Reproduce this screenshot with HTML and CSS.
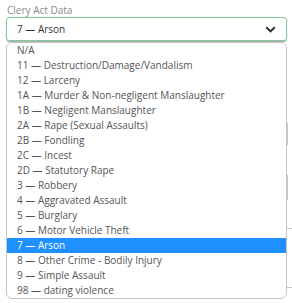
FILE: index.html
```html
<!DOCTYPE html>
<html lang="en">
<head>
    <meta charset="UTF-8">
    <meta name="viewport" content="width=device-width, initial-scale=1.0">
    <title>Clery Act Data</title>
    <link rel="stylesheet" href="styles.css">
</head>
<body>
    <div class="field">
        <label class="field-label">Clery Act Data</label>
        <div class="select">
            <span class="select-value">7 — Arson</span>
            <svg class="chevron" width="11" height="7" viewBox="0 0 11 7">
                <path d="M1.2 1.2 L5.5 5.3 L9.8 1.2" fill="none" stroke="#333" stroke-width="2"/>
            </svg>
        </div>
        <div class="behind">
            <span class="mark mark-a"></span>
            <span class="mark mark-b"></span>
            <span class="mark mark-c"></span>
            <span class="mark mark-d"></span>
        </div>
        <ul class="options">
            <li>N/A</li>
            <li>11 — Destruction/Damage/Vandalism</li>
            <li>12 — Larceny</li>
            <li>1A — Murder &amp; Non-negligent Manslaughter</li>
            <li>1B — Negligent Manslaughter</li>
            <li>2A — Rape (Sexual Assaults)</li>
            <li>2B — Fondling</li>
            <li>2C — Incest</li>
            <li>2D — Statutory Rape</li>
            <li>3 — Robbery</li>
            <li>4 — Aggravated Assault</li>
            <li>5 — Burglary</li>
            <li>6 — Motor Vehicle Theft</li>
            <li class="selected">7 — Arson</li>
            <li>8 — Other Crime - Bodily Injury</li>
            <li>9 — Simple Assault</li>
            <li>98 — dating violence</li>
        </ul>
    </div>
</body>
</html>
```

FILE: styles.css
```css
body {
    margin: 0;
    background: white;
    font-family: "Open Sans", Arial, sans-serif;
    font-size: 10px;
}
.field {
    position: relative;
    padding: 3px 5px 0 6px;
}
.field-label {
    display: block;
    color: #8a8a8a;
    height: 14px;
    line-height: 14px;
    padding-left: 1px;
}
.select {
    display: flex;
    align-items: center;
    justify-content: space-between;
    height: 22px;
    border: 1px solid #82c99c;
    border-radius: 3px;
    padding: 0 10px 0 10px;
    color: #333;
    box-shadow: 0 1px 1px rgba(0,0,0,0.35);
}
.select-value {
    line-height: 22px;
}
.chevron {
    margin-top: 1px;
}
.options {
    list-style: none;
    margin: 1px 0 0 0;
    padding: 0;
    border: 1px solid #c6c6c6;
    border-radius: 6px;
    background: white;
    position: relative;
    overflow: hidden;
}
.options li {
    height: 15px;
    line-height: 15px;
    padding-left: 10px;
    color: #555;
    white-space: nowrap;
}
.options li.selected {
    background: #1e90ff;
    color: white;
}
.behind {
    position: absolute;
    left: 0;
    top: 0;
}
.mark {
    position: absolute;
    background: #c8c8c8;
}
.mark-a { left: 286px; top: 123px; width: 2px; height: 22px; }
.mark-b { left: 286px; top: 175px; width: 2px; height: 25px; }
.mark-c { left: 286px; top: 228px; width: 6px; height: 1px; }
.mark-d { left: 286px; top: 287px; width: 6px; height: 1px; }
```
